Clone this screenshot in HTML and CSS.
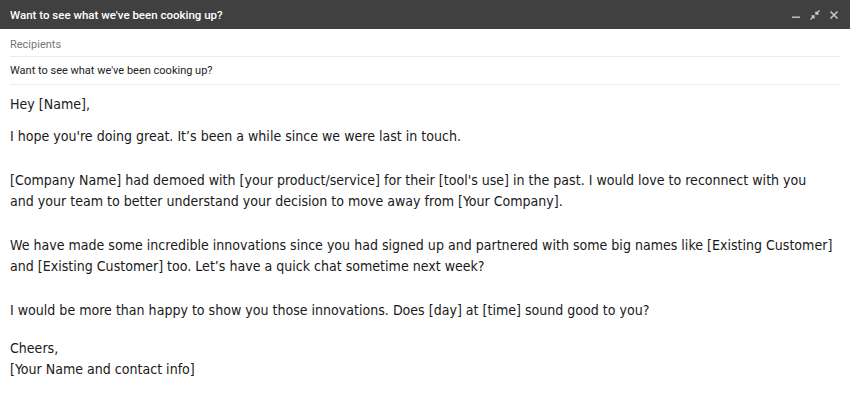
FILE: index.html
```html
<!DOCTYPE html>
<html>
<head>
<meta charset="utf-8">
<link rel="stylesheet" href="styles.css">
</head>
<body>
<div class="window">
  <div class="titlebar">
    <span class="title">Want to see what we've been cooking up?</span>
    <div class="controls">
      <svg class="ic" width="12" height="12" viewBox="0 0 12 12"><rect x="2" y="7.5" width="8" height="1.4" fill="#c8c8c8"/></svg>
      <svg class="ic" width="12" height="12" viewBox="0 0 12 12"><path d="M10.5 1.5 L7 5 M7 2.5 V5 H9.5 M1.5 10.5 L5 7 M2.5 7 H5 V9.5" stroke="#c8c8c8" stroke-width="1.4" fill="none"/></svg>
      <svg class="ic" width="12" height="12" viewBox="0 0 12 12"><path d="M2.5 2.5 L9.5 9.5 M9.5 2.5 L2.5 9.5" stroke="#c8c8c8" stroke-width="1.5"/></svg>
    </div>
  </div>
  <div class="field recipients">Recipients</div>
  <div class="field subject">Want to see what we've been cooking up?</div>
  <div class="body">
    <p class="greet">Hey [Name],</p>
    <p>I hope you're doing great. It’s been a while since we were last in touch.</p>
    <p>[Company Name] had demoed with [your product/service] for their [tool's use] in the past. I would love to reconnect with you<br>and your team to better understand your decision to move away from [Your Company].</p>
    <p>We have made some incredible innovations since you had signed up and partnered with some big names like [Existing Customer]<br>and [Existing Customer] too. Let’s have a quick chat sometime next week?</p>
    <p>I would be more than happy to show you those innovations. Does [day] at [time] sound good to you?</p>
    <p class="sign">Cheers,<br>[Your Name and contact info]</p>
  </div>
</div>
</body>
</html>
```
FILE: styles.css
```css
html, body { margin: 0; padding: 0; background: #fff; }
.window { width: 850px; height: 405px; overflow: hidden; }
.titlebar {
  height: 29px;
  background: #404040;
  display: flex;
  align-items: center;
  justify-content: space-between;
  padding: 0 10px;
  box-sizing: border-box;
}
.title {
  font-family: Roboto, "Liberation Sans", sans-serif;
  font-size: 11.5px;
  font-weight: 500;
  color: #fff;
}
.controls { display: flex; gap: 7px; align-items: center; }
.ic { display: block; }
.field {
  margin: 0 10px;
  font-family: Roboto, "Liberation Sans", sans-serif;
  font-size: 11px;
  border-bottom: 1px solid #ececec;
  box-sizing: border-box;
  display: flex;
  align-items: center;
}
.recipients { height: 28px; color: #777; padding-top: 3px; }
.subject { height: 28px; color: #222; }
.body {
  padding: 0 10px;
  font-family: "DejaVu Sans Condensed", "DejaVu Sans", sans-serif;
  font-size: 14.05px;
  line-height: 21.5px;
  color: #1a1a1a;
  white-space: nowrap;
}
.body p { margin: 0 0 22px; }
.body p.greet { margin: 9px 0 10.5px; }
.body p.sign { margin-top: -5.5px; }
```
